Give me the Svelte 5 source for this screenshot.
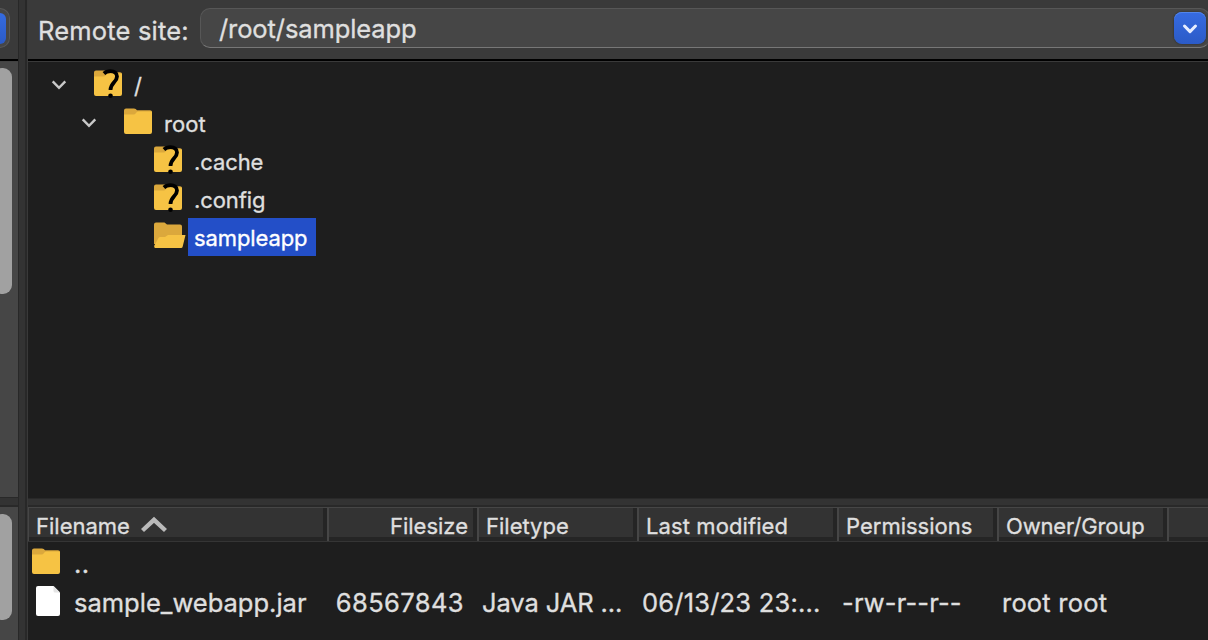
<script>
  const tree = [
    { label: '/', depth: 0, icon: 'unknown', expanded: true },
    { label: 'root', depth: 1, icon: 'folder', expanded: true },
    { label: '.cache', depth: 2, icon: 'unknown' },
    { label: '.config', depth: 2, icon: 'unknown' },
    { label: 'sampleapp', depth: 2, icon: 'open', selected: true }
  ];
  const columns = ['Filename', 'Filesize', 'Filetype', 'Last modified', 'Permissions', 'Owner/Group', ''];
</script>

{#snippet folder(kind)}
  <svg class="folder" width="32" height="31" viewBox="0 0 32 31">
    {#if kind === 'open'}
      <path d="M0 4.500Q0 2.500 2 2.500H10.500L13 4.500H26Q28 4.500 28 6.500V24H0Z" fill="#dba83c" />
      <path d="M0.5 27.500Q0 27 0.3 25.500L4.500 18Q5 17 6 17H11L14 15H31.5L28.7 26.500Q28.4 28 27 28H1Z" fill="#f6c344" />
    {:else}
      <path d="M0 4.500Q0 2.500 2 2.500H10Q12 2.500 13 4.300H26Q28 4.300 28 6.300V20H0Z" fill="#dba83c" />
      <path d="M0 8.500H9.5Q11 8.500 12 7Q13 5.600 14.500 5.600H28V26Q28 28 26 28H2Q0 28 0 26Z" fill="#f6c344" />
      {#if kind === 'unknown'}
        <path d="M9.900 5.500C12 3.500 14.300 3.100 16.500 3.100C20.300 3.100 23 5 23 8.500C23 14 16.500 14.800 16.500 22" fill="none" stroke="#000" stroke-width="3.800" />
        <circle cx="16.5" cy="27.700" r="2.300" fill="#000" />
      {/if}
    {/if}
  </svg>
{/snippet}

<div class="window">
  <aside class="left">
    <div class="left-tools"><div class="left-combo"><i></i></div></div>
    <div class="track upper"><i></i></div>
    <div class="left-sash"></div>
    <div class="track lower"><i></i></div>
  </aside>
  <div class="splitter"></div>
  <main>
    <header class="site-bar">
      <label for="site"><span>Remote site:</span></label>
      <div class="combo" id="site">
        <span>/root/sampleapp</span>
        <button aria-label="Show paths">
          <svg width="32" height="32" viewBox="0 0 32 32"><path d="M10.5 14L16 19.600L21.5 14" fill="none" stroke="#e6edff" stroke-width="3" stroke-linecap="round" stroke-linejoin="round" /></svg>
        </button>
      </div>
    </header>
    <section class="tree">
      {#each tree as item}
        <div class="node depth{item.depth}">
          <span class="toggle">
            {#if item.expanded}
              <svg width="16" height="12" viewBox="0 0 16 12"><path d="M1.7 2.4L8 8.8L14.3 2.4" fill="none" stroke="#c9c9c9" stroke-width="2.4" /></svg>
            {/if}
          </span>
          {@render folder(item.icon)}
          <span class="label" class:selected={item.selected}><span>{item.label}</span></span>
        </div>
      {/each}
    </section>
    <div class="sash"></div>
    <section class="files">
      <div class="head">
        {#each columns as name, i}
          <div class="th" class:right={i === 1}>
            <span class="h{i}">{name}</span>
            {#if i === 0}
              <svg width="28" height="18" viewBox="0 0 28 18"><path d="M2.5 14.5L14 3.8L25.500 14.500" fill="none" stroke="#bababa" stroke-width="4.4" /></svg>
            {/if}
          </div>
        {/each}
      </div>
      <div class="row parent">
        {@render folder('folder')}
        <span class="up">..</span>
      </div>
      <div class="row file">
        <div class="cell name">
          <svg width="24" height="30" viewBox="0 0 24 30"><path d="M2 0H17.500L24 6.500V28Q24 30 22 30H2Q0 30 0 28V2Q0 0 2 0Z" fill="#fff" /><path d="M17.500 0L24 6.500H19Q17.500 6.500 17.500 5Z" fill="#e4e4e4" /></svg>
          <span>sample_webapp.jar</span>
        </div>
        <div class="cell size"><span>68567843</span></div>
        <div class="cell"><span class="type">Java JAR ...</span></div>
        <div class="cell"><span class="date">06/13/23 23:...</span></div>
        <div class="cell"><span class="perm">-rw-r--r--</span></div>
        <div class="cell"><span class="owner">root root</span></div>
      </div>
    </section>
  </main>
</div>

<style>
  :global(body) { margin: 0; background: #1e1e1e; overflow: hidden; }
  .window { display: grid; grid-template-columns: 18px 10px 1180px; width: 1208px; height: 640px; overflow: hidden; background: #1e1e1e; color: #dfdfdf; font-family: Inter, "Liberation Sans", sans-serif; -webkit-text-stroke: 0.35px currentColor; white-space: nowrap; }
  .window * { box-sizing: border-box; }
  svg { display: block; flex: none; }
  .left { display: grid; grid-template-rows: 62px 435px 10px 133px; width: 18px; overflow: hidden; }
  .left-tools { background: #3a3a3a; border-bottom: 1px solid #424242; box-shadow: inset 0 -2px #000; padding-top: 8px; }
  .left-combo { width: 10px; height: 40px; padding-top: 4px; background: #464646; border: 1px solid #585858; border-left: 0; border-radius: 0 10px 10px 0; }
  .left-combo i { display: block; width: 6px; height: 31px; border-radius: 0 7px 7px 0; background: linear-gradient(#356be0, #2b5bc7); }
  .track { background: #464646; overflow: hidden; }
  .track i { display: block; width: 19px; margin-left: -7px; border-radius: 9px; background: #a1a1a1; }
  .upper { padding-top: 6px; }
  .upper i { height: 226px; }
  .lower { padding-top: 7px; }
  .lower i { height: 106px; }
  .left-sash { background: #333; border-top: 1px solid #292929; border-bottom: 2px solid #292929; }
  .splitter { background: #333; border-left: 1px solid #282828; border-right: 1px solid #393939; box-shadow: inset -2px 0 #282828; }
  main { display: grid; grid-template-rows: 62px 436px 9px 133px; min-width: 0; }
  .site-bar { display: flex; align-items: flex-start; background: #3a3a3a; border-bottom: 1px solid #3a3a3a; box-shadow: inset 0 -2px #000; padding: 8px 0 0 10px; }
  label { width: 162px; height: 40px; font-size: 25.5px; line-height: 46px; }
  label span { letter-spacing: 0.18px; }
  .combo { display: flex; justify-content: space-between; align-items: center; width: 1010px; height: 40px; padding: 0 3px 0 18px; background: #464646; border: 1px solid #575757; border-bottom: 1px solid #777; border-radius: 10px; font-size: 25.5px; line-height: 38px; }
  .combo span { letter-spacing: -0.1px; padding-top: 1px; }
  button { border: 0; padding: 0; width: 32px; height: 32px; border-radius: 8px; background: linear-gradient(#366be1, #2b5bc7); box-shadow: 0 0 2px #222, inset 0 1px #5285ea; }
  .tree { padding-top: 4px; overflow: hidden; }
  .node { display: flex; height: 38px; align-items: flex-start; padding-left: 23px; font-size: 22px; }
  .depth1 { padding-left: 53px; }
  .depth2 { padding-left: 83px; }
  .toggle { width: 43px; height: 38px; padding: 13px 0 0; }
  .label { height: 38px; margin-left: 2px; padding: 0 6px; line-height: 40px; }
  .tree .folder { margin-top: 2px; }
  .selected { width: 128px; background: #234fc8; color: #fff; }
  .label span { letter-spacing: -0.1px; }
  .depth1 .label span { letter-spacing: 0.1px; }
  .sash { background: #333; border-top: 1px solid #292929; border-bottom: 2px solid #292929; }
  .files { overflow: hidden; }
  .head { display: grid; grid-template-columns: 299px 150px 160px 200px 160px 170px 41px; height: 35px; font-size: 22px; border-bottom: 1px solid #353535; }
  .th { display: flex; align-items: flex-start; padding: 1px 0 0 7px; height: 34px; line-height: 34px; background: #333; border-left: 2px solid #464646; border-top: 1px solid #464646; box-shadow: inset -4px 0 #252525, inset 0 -4px #252525; }
  .th:first-child { border-left-width: 1px; padding-left: 7px; }
  .th:last-child { box-shadow: inset 0 -4px #252525; }
  .h3 { letter-spacing: 0.1px; }
  .h5 { letter-spacing: -0.15px; }
  .right { justify-content: flex-end; padding-right: 9px; }
  .th svg { margin: 7px 0 0 10px; }
  .row { display: flex; font-size: 25.5px; }
  .parent { height: 38px; padding: 4px 0 0 4px; }
  .up { margin-left: 10px; line-height: 36px; letter-spacing: 0.3px; }
  .file { display: grid; grid-template-columns: 304px 150px 160px 200px 160px 206px; height: 46px; line-height: 46px; }
  .name { display: flex; padding: 6px 0 0 8px; }
  .name span { margin-left: 14px; line-height: 34px; letter-spacing: 0; }
  .size { width: 132px; text-align: right; letter-spacing: 0.4px; }
  .type { letter-spacing: -0.1px; }
  .date { letter-spacing: 0.2px; }
  .perm { letter-spacing: 0.15px; }
  .owner { letter-spacing: 0.2px; }
</style>
